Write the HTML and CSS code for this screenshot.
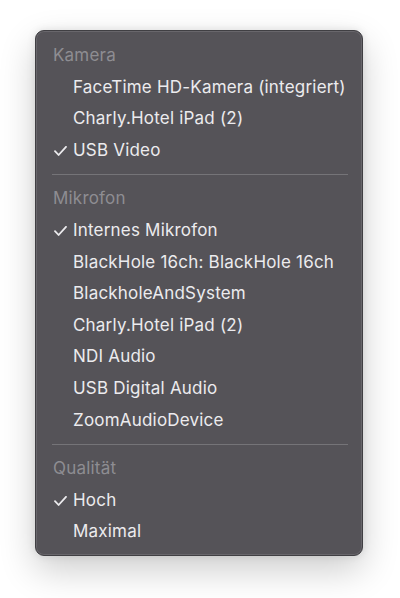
FILE: index.html
```html
<!DOCTYPE html>
<html lang="de">
<head>
    <meta charset="UTF-8">
    <meta name="viewport" content="width=device-width, initial-scale=1.0">
    <title>Menü</title>
    <link rel="stylesheet" href="styles.css">
</head>
<body>
<div class="menu">
    <div class="menu-header">Kamera</div>
    <div class="menu-item">FaceTime HD-Kamera (integriert)</div>
    <div class="menu-item">Charly.Hotel iPad (2)</div>
    <div class="menu-item">
        <svg class="check" viewBox="0 0 13 10"><polyline points="1,5.2 4.6,9 12,0.8"/></svg>USB Video
    </div>
    <div class="menu-sep"></div>
    <div class="menu-header">Mikrofon</div>
    <div class="menu-item">
        <svg class="check" viewBox="0 0 13 10"><polyline points="1,5.2 4.6,9 12,0.8"/></svg>Internes Mikrofon
    </div>
    <div class="menu-item">BlackHole 16ch: BlackHole 16ch</div>
    <div class="menu-item">BlackholeAndSystem</div>
    <div class="menu-item">Charly.Hotel iPad (2)</div>
    <div class="menu-item">NDI Audio</div>
    <div class="menu-item">USB Digital Audio</div>
    <div class="menu-item">ZoomAudioDevice</div>
    <div class="menu-sep"></div>
    <div class="menu-header">Qualität</div>
    <div class="menu-item">
        <svg class="check" viewBox="0 0 13 10"><polyline points="1,5.2 4.6,9 12,0.8"/></svg>Hoch
    </div>
    <div class="menu-item">Maximal</div>
</div>
</body>
</html>
```

FILE: styles.css
```css
/* Page */
body {
    box-sizing: border-box;
    margin: 0;
    padding: 30px 0 0 35px;
    min-height: 100vh;
    background-color: #ffffff;
    font-family: 'Inter', 'Noto Sans', sans-serif;
    font-size: 17px;
    letter-spacing: 0.2px;
}

/* Dropdown menu */
.menu {
    box-sizing: border-box;
    width: 328px;
    padding: 9px 0 7px;
    background-color: #555358;
    border: 1px solid #403f43;
    border-radius: 9px;
    box-shadow: inset 0 0 0 1px #68666b, 0 14px 36px rgba(0, 0, 0, 0.2), 0 0 8px rgba(0, 0, 0, 0.1);
}

.menu-header,
.menu-item {
    height: 31.6px;
    line-height: 31.6px;
    white-space: nowrap;
}

.menu-header {
    padding-left: 17px;
    color: #8e8d92;
}

.menu-item {
    position: relative;
    padding-left: 37px;
    color: #ecebee;
}

/* Checkmark in front of the selected entry */
.check {
    position: absolute;
    left: 18px;
    top: 11px;
    width: 13px;
    height: 10px;
    fill: none;
    stroke: #ecebee;
    stroke-width: 1.8;
    stroke-linecap: round;
    stroke-linejoin: round;
}

.menu-sep {
    height: 1px;
    margin: 8px 14px 8px 16px;
    background-color: #757478;
}
```
